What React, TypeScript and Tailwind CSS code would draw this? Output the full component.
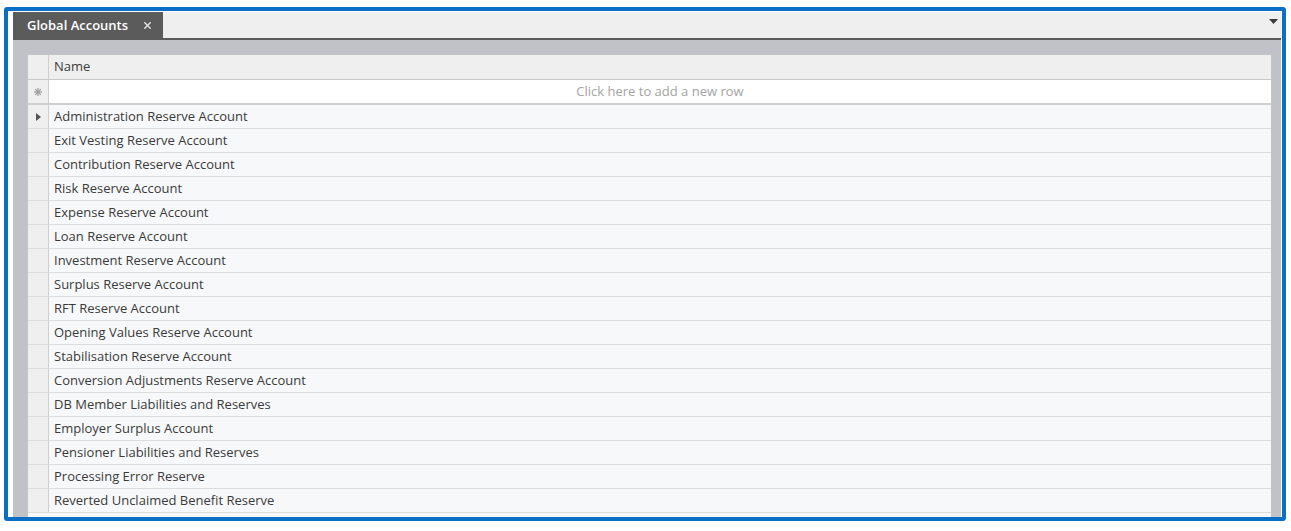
import { X } from 'lucide-react'

const accounts = [
  'Administration Reserve Account',
  'Exit Vesting Reserve Account',
  'Contribution Reserve Account',
  'Risk Reserve Account',
  'Expense Reserve Account',
  'Loan Reserve Account',
  'Investment Reserve Account',
  'Surplus Reserve Account',
  'RFT Reserve Account',
  'Opening Values Reserve Account',
  'Stabilisation Reserve Account',
  'Conversion Adjustments Reserve Account',
  'DB Member Liabilities and Reserves',
  'Employer Surplus Account',
  'Pensioner Liabilities and Reserves',
  'Processing Error Reserve',
  'Reverted Unclaimed Benefit Reserve',
]

export default function App() {
  return (
    <div className="w-[1291px] h-[531px] bg-white overflow-hidden font-['Open_Sans','Noto_Sans',sans-serif] text-[13px] text-[#3b3b3b]">
      <div className="ml-[4px] mt-[7px] w-[1282px] h-[514px] border-4 border-[#0b6fc6] rounded-[3px] pl-[5px] pt-[1px] pr-[1px] flex flex-col">
        {/* Tab strip */}
        <div className="h-[26px] bg-[#efefef] flex items-stretch">
          <div className="w-[150px] bg-[#5b5b5b] text-white font-semibold text-[13px] flex items-center pl-[14px] pt-[1px]">
            <span>Global Accounts</span>
            <X className="h-[11px] w-[11px] ml-[14px] text-[#e6e6e6]" strokeWidth={3} />
          </div>
          <div className="flex-1" />
          <div className="w-[12px] flex items-start pt-[7px]">
            <svg width="9" height="6" viewBox="0 0 9 6">
              <polygon points="0,0 9,0 4.5,5" fill="#3a3a3a" />
            </svg>
          </div>
        </div>
        <div className="h-[2px] bg-[#5b5b5b]" />

        {/* Panel */}
        <div className="flex-1 bg-[#c1c2c7] pl-[14px] pt-[14px] pr-[9px] overflow-hidden">
          <div className="h-full border-l border-r border-t border-[#c4c4c4] bg-[#f7f8fa] overflow-hidden">
            {/* Header */}
            <div className="flex h-[25px] bg-[#efefef] border-b border-[#c9c9c9]">
              <div className="w-[21px] border-r border-[#cfcfcf]" />
              <div className="flex-1 flex items-center pl-[5px]">Name</div>
            </div>
            {/* New row */}
            <div className="flex h-[25px] bg-white border-b-2 border-[#cfcfcf]">
              <div className="w-[21px] bg-[#efefef] border-r border-[#cfcfcf] flex items-center justify-center">
                <svg width="8" height="8" viewBox="0 0 8 8" stroke="#9a9a9a" strokeWidth="1.2">
                  <line x1="4" y1="0" x2="4" y2="8" />
                  <line x1="0" y1="4" x2="8" y2="4" />
                  <line x1="1.2" y1="1.2" x2="6.8" y2="6.8" />
                  <line x1="6.8" y1="1.2" x2="1.2" y2="6.8" />
                </svg>
              </div>
              <div className="flex-1 flex items-center justify-center pt-[1px] text-[#a3a3a3]">
                Click here to add a new row
              </div>
            </div>
            {/* Data rows */}
            {accounts.map((name, i) => (
              <div key={name} className="flex h-[24px] border-b border-[#dcdcdc]">
                <div className="w-[21px] bg-[#efefef] border-r border-[#cfcfcf] flex items-center justify-center">
                  {i === 0 && (
                    <svg width="5" height="8" viewBox="0 0 5 8">
                      <polygon points="0,0 5,4 0,8" fill="#555" />
                    </svg>
                  )}
                </div>
                <div className="flex-1 flex items-center pl-[5px]">{name}</div>
              </div>
            ))}
          </div>
        </div>
      </div>
    </div>
  )
}
